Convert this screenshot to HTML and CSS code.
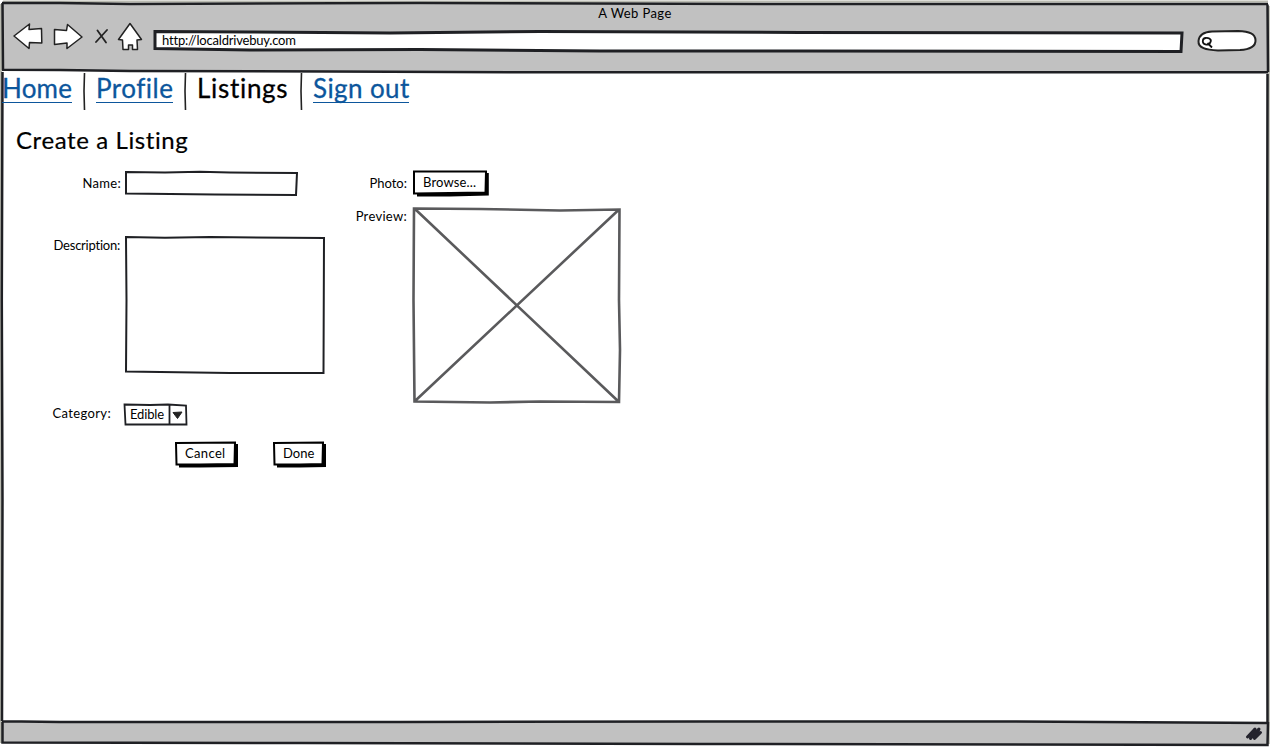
FILE: index.html
```html
<!DOCTYPE html>
<html lang="en">
<head>
<meta charset="utf-8">
<title>A Web Page</title>
<link rel="stylesheet" href="styles.css">
</head>
<body>
<div class="window">
  <svg class="frame" width="1270" height="747" viewBox="0 0 1270 747" fill="none">
    <path class="chrome" d="M2 3.500L300 4.500L700 3.500L1268 4.500L1267 72L640 72L330 71.500L120 70L2 70.500Z"/>
    <path class="chrome" d="M2 721.500L400 722.500L900 721L1268 722L1267 745L600 744L2 742.500Z"/>
    <path class="edge-shade" d="M1 4V743M1268.800 6V744M3 1.500H1268"/>
    <path class="edge" d="M2 3L60 3L130 4L420 3L800 4L1268 4M2.500 3L3 70M2 69.800L60 70L130 71L330 71.500L520 72.300L1268 72.300M1267.500 4.500L1268 72M2.500 72L1.800 300L2.500 500L2 721M1267.500 74L1267 400L1267.500 722M2 721.300L60 722L400 722L700 721.500L1000 721.500L1268 723M2.500 722V742.500L300 743L700 744L1267.500 745L1268 722"/>
  </svg>
  <div class="page">
    <header class="browser">
      <div class="browser-title"><span class="t-title">A Web Page</span></div>
      <div class="toolbar">
        <svg class="icon" width="31" height="28" viewBox="13 23 31 28"><path class="glyph" d="M14 36L29.500 24L29 29.500L41.500 28.500L41.800 43L29.500 42.500L29 48.500Z"/></svg>
        <svg class="icon icon-forward" width="31" height="28" viewBox="53 23 31 28"><path class="glyph" d="M54.500 29.500L66.500 30.500L67.500 24.500L82 37L67 48.500L67 43L54.500 44.500Z"/></svg>
        <svg class="icon icon-stop" width="15" height="28" viewBox="95 23 15 28"><path class="stroke" d="M97.500 30.500L106 42.500M107 30L96 42"/></svg>
        <svg class="icon icon-home" width="26" height="30" viewBox="117 22 26 30"><path class="glyph" d="M130 23.500L141.500 39.500L137 40L137.500 49.500H132.500V45H128.500V49.500H123L122.500 40L118.500 39.500Z"/></svg>
        <div class="address sketch">
          <svg class="sketch-frame" width="1032" height="24" viewBox="152 29 1032 24"><path class="address-box" d="M155 31.500L250 32L390 33L540 31.500L800 32.500L1182 33L1181 51.500L800 51L600 51L420 49.500L250 50L155 48.500Z"/></svg>
          <span class="t-url">http://localdrivebuy.com</span>
        </div>
        <svg class="icon icon-search" width="62" height="25" viewBox="1196 29 62 25">
          <path class="search-box" d="M1198.500 41C1199 35 1204 32 1212 31.500L1238 31C1250 31.500 1255 34 1255.500 40C1256 46 1250 49.500 1240 50L1218 50.500C1206 50 1198 48 1198.500 41Z"/>
          <path class="lens" d="M1204 38.500C1208 37 1212 39 1210.500 42C1209 46 1203 45 1202.800 41.500C1202.800 39 1204 38 1206 38M1207.500 43L1212 47.500"/>
        </svg>
      </div>
    </header>
    <nav class="menu">
      <a class="menu-item link t-home">Home</a><svg class="rule" width="3" height="38"><path d="M1.500 0L1 18L1.500 37"/></svg>
      <a class="menu-item link t-profile">Profile</a><svg class="rule" width="3" height="38"><path d="M1.500 0L1 18L1.500 37"/></svg>
      <span class="menu-item t-listings">Listings</span><svg class="rule" width="3" height="38"><path d="M1.500 0L1 18L1.500 37"/></svg>
      <a class="menu-item link t-signout">Sign out</a>
    </nav>
    <main>
      <h1><span class="t-h1">Create a Listing</span></h1>
      <div class="form">
        <div class="column column-details">
          <div class="row row-name">
            <label class="label"><span class="t-name">Name:</span></label>
            <svg class="field" width="174" height="27" viewBox="124 170 174 27"><path class="ink" d="M126 172L165 172.500L200 171.800L230 172.500L297 173L296 195L215 194.500L126 193.500Z"/></svg>
          </div>
          <div class="row row-description">
            <label class="label"><span class="t-description">Description:</span></label>
            <svg class="field" width="201" height="140" viewBox="124 235 201 140"><path class="ink" d="M126 237L165 237.800L210 237L324 238L323.500 373L230 373L126 371.500L126.500 300Z"/></svg>
          </div>
          <div class="row row-category">
            <label class="label"><span class="t-category">Category:</span></label>
            <div class="select sketch">
              <svg class="sketch-frame" width="66" height="25" viewBox="122 402 66 25"><path class="ink select-box" d="M124.500 404.500L150 405L168 404.500L186 405.500L186.500 424.500H125.500ZM169.500 405V424"/><path class="arrow" d="M173 412.500L182 412L177.500 418.500Z"/></svg>
              <span class="t-edible">Edible</span>
            </div>
          </div>
          <div class="actions">
            <button class="button sketch cancel" type="button">
              <svg class="sketch-frame" width="64" height="28" viewBox="175 441 64 28"><path class="shadow" d="M179 444H238V467L200 467.500L179 467.500Z"/><path class="button-box" d="M176 443L235 442.500L234.500 464L200 464.500L176.500 464.500Z"/></svg>
              <span class="t-cancel">Cancel</span>
            </button>
            <button class="button sketch done" type="button">
              <svg class="sketch-frame" width="54" height="28" viewBox="273 441 54 28"><path class="shadow" d="M277 444H326V467L300 467.500H277Z"/><path class="button-box" d="M274 443L323 442.500L322.500 464L300 464.500L274.500 464.500Z"/></svg>
              <span class="t-done">Done</span>
            </button>
          </div>
        </div>
        <div class="column column-photo">
          <div class="row row-photo">
            <label class="label"><span class="t-photo">Photo:</span></label>
            <button class="button sketch browse" type="button">
              <svg class="sketch-frame" width="78" height="28" viewBox="412 169 78 28"><path class="shadow" d="M417 173H488.800V195.500L450 196.500H417Z"/><path class="button-box" d="M414 171.500L486 171.500L485.500 192.500L450 193L414 193.500Z"/></svg>
              <span class="t-browse">Browse...</span>
            </button>
          </div>
          <div class="row row-preview">
            <label class="label"><span class="t-preview">Preview:</span></label>
            <svg class="preview" width="210" height="200" viewBox="412 205 210 200"><path d="M414 208.500L480 209L560 210.500L619.500 209.500L619 300L620 350L619 402L540 401.500L490 402.500L414.500 401.500L413.500 300ZM415 209L619 402M618.500 210L415 401"/></svg>
          </div>
        </div>
      </div>
    </main>
    <footer class="statusbar">
      <svg width="18" height="16" viewBox="1245 726 18 16"><path class="grip" d="M1247.500 737L1255 729L1250.500 738.500L1259 729L1254.500 738.500L1260.500 732.500"/></svg>
    </footer>
  </div>
</div>
</body>
</html>
```
FILE: styles.css
```css
* { box-sizing: border-box; }
body { margin: 0; background: #fff; color: #000; font-family: Lato, sans-serif; font-size: 13px; line-height: 16px; font-variant-ligatures: none; overflow: hidden; }
svg { display: block; flex: none; }
.window { display: grid; width: 1270px; height: 747px; }
.frame, .page { grid-area: 1 / 1; }
.page { display: flex; flex-direction: column; }
.chrome { fill: #c1c1c1; }
.edge { stroke: #1f2024; stroke-width: 2.5; }
.edge-shade { stroke: #b9bab0; stroke-width: 2; }

.browser { height: 72px; padding-top: 5px; }
.browser-title { text-align: center; height: 16px; }
.toolbar { display: flex; align-items: flex-start; padding: 2px 0 0 13px; }
.icon-forward { margin-left: 9px; }
.icon-stop { margin-left: 11px; }
.icon-home { margin: -1px 0 0 7px; }
.icon-search { margin: 6px 0 0 12px; }
.glyph { fill: #fff; stroke: #222; stroke-width: 1.5; stroke-linejoin: round; }
.stroke { fill: none; stroke: #222; stroke-width: 1.8; stroke-linecap: round; }
.sketch { display: grid; flex: none; }
.sketch > * { grid-area: 1 / 1; }
.address { margin: 6px 0 0 9px; }
.address > span { margin: 3px 0 0 10px; }
.address-box { fill: #fff; stroke: #1f2024; stroke-width: 3; }
.search-box { fill: #fff; stroke: #222; stroke-width: 2; }
.lens { fill: none; stroke: #111; stroke-width: 1.8; }

.menu { display: flex; height: 38px; padding: 1px 0 0 2px; font-size: 26px; line-height: 31px; -webkit-text-stroke: 0.3px; }
.menu-item { height: 30px; white-space: nowrap; }
.link { color: #0c569c; border-bottom: 1px solid #0c569c; }
.rule { margin: 0 10px 0 11px; }
.rule path { fill: none; stroke: #222; stroke-width: 1.6; }
.t-home { width: 70px; letter-spacing: 0.2px; }
.t-profile { width: 77px; letter-spacing: 0.5px; }
.t-listings { width: 92px; letter-spacing: 0.7px; }
.t-signout { width: 96px; letter-spacing: 0.4px; }

main { flex: 1; }
h1 { margin: 16px 0 0 16px; font-size: 24px; font-weight: 400; line-height: 28px; height: 44px; }
.t-h1 { letter-spacing: 0.6px; -webkit-text-stroke: 0.2px; }
.t-title { letter-spacing: 0.4px; }
.t-url { letter-spacing: -0.2px; }
.t-name { letter-spacing: 0.3px; }
.t-description { letter-spacing: -0.23px; }
.t-category { letter-spacing: 0.35px; }
.t-edible { letter-spacing: -0.15px; }
.t-cancel { letter-spacing: 0.35px; }
.t-browse { letter-spacing: 0.15px; }
.t-preview { letter-spacing: 0.3px; }

.form { display: flex; }
.column-details { width: 340px; }
.row { display: flex; align-items: flex-start; }
.label { text-align: right; white-space: nowrap; }
.column-details .label { width: 121px; margin-right: 3px; padding-top: 5px; }
.column-photo .label { width: 67px; margin-right: 5px; padding-top: 5px; }
.row-name { height: 65px; }
.row-description { height: 167px; }
.row-description .label { padding-right: 1px; padding-top: 2px; }
.row-category { height: 39px; }
.row-category .label { padding-right: 10px; padding-top: 3px; margin-right: 1px; }
.ink { fill: #fff; stroke: #1f2024; stroke-width: 2; }
.select-box { stroke-width: 1.8; }
.arrow { fill: #222; stroke: #222; }
.select > span { margin: 4px 0 0 8px; }
.actions { display: flex; padding-left: 175px; gap: 34px; }
.button { padding: 0; border: 0; background: none; color: #000; font: inherit; text-align: left; }
.button > span { margin: 4px 0 0 10px; }
.browse { margin-top: -1px; }
.browse > span { margin: 5px 0 0 11px; }
.shadow { fill: #000; }
.button-box { fill: #fff; stroke: #000; stroke-width: 2; }
.row-photo { height: 35px; }
.row-preview .label { padding-top: 3px; }
.preview path { fill: none; stroke: #5a5a5c; stroke-width: 2.6; }

.statusbar { display: flex; justify-content: flex-end; height: 27px; padding: 6px 7px 0 0; }
.grip { fill: none; stroke: #23222c; stroke-width: 3; stroke-linecap: round; stroke-linejoin: round; }
```
